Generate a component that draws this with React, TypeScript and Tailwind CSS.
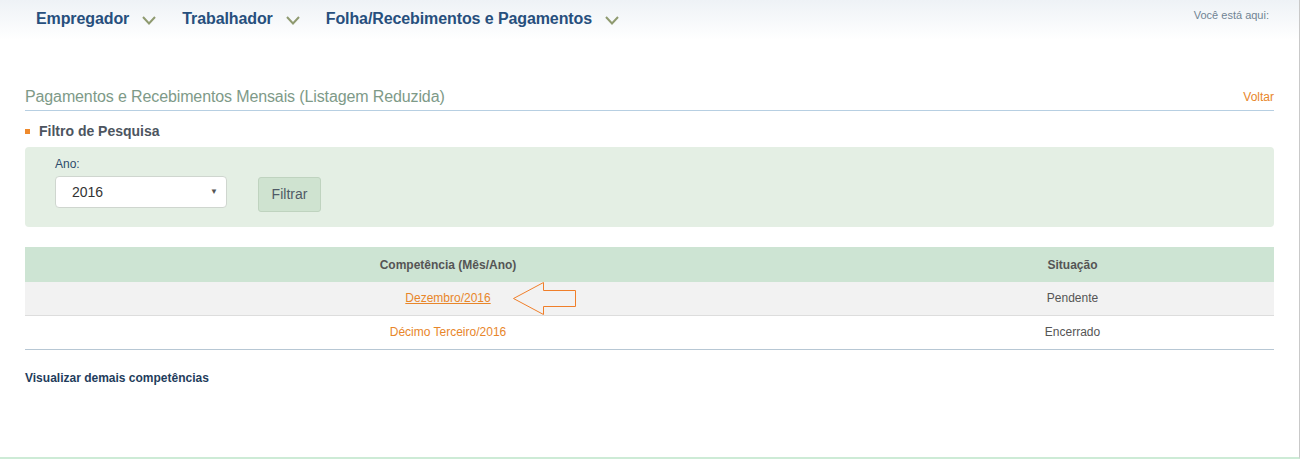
import React from 'react';

const Chevron = () => (
  <svg width="14" height="9" viewBox="0 0 14 9" className="ml-[13px] mt-[3px]">
    <path d="M1 1 7 7.5 13 1" fill="none" stroke="#8f9a70" strokeWidth="2" />
  </svg>
);

const navItems = ['Empregador', 'Trabalhador', 'Folha/Recebimentos e Pagamentos'];

const rows = [
  { label: 'Dezembro/2016', status: 'Pendente', active: true },
  { label: 'Décimo Terceiro/2016', status: 'Encerrado', active: false },
];

export default function App() {
  return (
    <div
      className="w-[1300px] h-[459px] bg-white border-r border-[#c9c9c9] border-b-2 border-b-[#cdebd6] flex flex-col"
      style={{ fontFamily: '"Liberation Sans", Arial, sans-serif' }}
    >
      {/* top nav */}
      <div className="h-[40px] bg-gradient-to-b from-[#eef2f6] to-white flex items-start pt-[10px] pl-[36px] pr-[30px]">
        <div className="flex items-center gap-[26px]">
          {navItems.map((item) => (
            <div key={item} className="flex items-center">
              <span className="text-[16px] leading-[18px] font-bold text-[#274f7d] tracking-[-0.1px]">{item}</span>
              <Chevron />
            </div>
          ))}
        </div>
        <div className="ml-auto mt-[-2px] text-[11px] leading-[14px] text-[#708494]">Você está aqui:</div>
      </div>

      <div className="px-[25px] pr-[25px] flex flex-col">
        {/* title */}
        <div className="mt-[48px] flex items-end justify-between border-b border-[#b7cfe2] pb-[4px]">
          <h1 className="text-[16px] leading-[18px] text-[#7e9a88] tracking-[-0.12px]">
            Pagamentos e Recebimentos Mensais (Listagem Reduzida)
          </h1>
          <a className="text-[12px] leading-[18px] text-[#e8862a] cursor-pointer">Voltar</a>
        </div>

        {/* filter */}
        <div className="mt-[12px] flex items-center">
          <span className="w-[5px] h-[5px] bg-[#ef8a2c] mr-[9px]" />
          <h2 className="text-[14px] leading-[16px] font-bold text-[#4d5560]">Filtro de Pesquisa</h2>
        </div>

        <div className="mt-[8px] h-[80px] rounded-[4px] bg-[#e4efe4] pl-[30px] pt-[10px] flex items-start gap-[31px]">
          <div className="flex flex-col">
            <label className="text-[12px] leading-[14px] text-[#2d4b6b]">Ano:</label>
            <div className="mt-[5px] w-[172px] h-[32px] bg-white border border-[#cfd6cf] rounded-[4px] flex items-center pl-[16px] pr-[8px]">
              <span className="text-[14px] text-[#333]">2016</span>
              <span className="ml-auto text-[8px] text-[#555]">▼</span>
            </div>
          </div>
          <button className="mt-[20px] w-[63px] h-[35px] bg-[#cfe3d0] border border-[#bfd3bf] rounded-[3px] text-[14px] text-[#4f5a66]">
            Filtrar
          </button>
        </div>

        {/* table */}
        <table className="mt-[20px] w-full border-collapse text-[12px]">
          <thead>
            <tr className="bg-[#cde4d3] h-[35px]">
              <th className="w-[846px] font-bold text-[#555] text-center">Competência (Mês/Ano)</th>
              <th className="font-bold text-[#555] text-center">Situação</th>
            </tr>
          </thead>
          <tbody>
            {rows.map((r, i) => (
              <tr
                key={r.label}
                className={
                  i === 0
                    ? 'h-[33px] bg-[#f2f2f2] border-b border-[#dddddd]'
                    : 'h-[34px] bg-white border-b border-[#b7c7d4]'
                }
              >
                <td className="text-center relative">
                  <a className={r.active ? 'text-[#e8862a] underline' : 'text-[#e8862a]'}>{r.label}</a>
                  {r.active && (
                    <svg
                      width="66"
                      height="34"
                      viewBox="0 0 66 34"
                      className="absolute left-[487px] top-0"
                    >
                      <path
                        d="M1.5 16.5 31.5 0.5 V8.5 H63.5 V24.5 H31.5 V32.5 Z"
                        fill="none"
                        stroke="#f07f2a"
                        strokeWidth="1"
                      />
                    </svg>
                  )}
                </td>
                <td className="text-center text-[#555]">{r.status}</td>
              </tr>
            ))}
          </tbody>
        </table>

        <a className="mt-[21px] text-[12px] leading-[14px] font-bold text-[#1f3d5c] cursor-pointer">
          Visualizar demais competências
        </a>
      </div>
    </div>
  );
}
